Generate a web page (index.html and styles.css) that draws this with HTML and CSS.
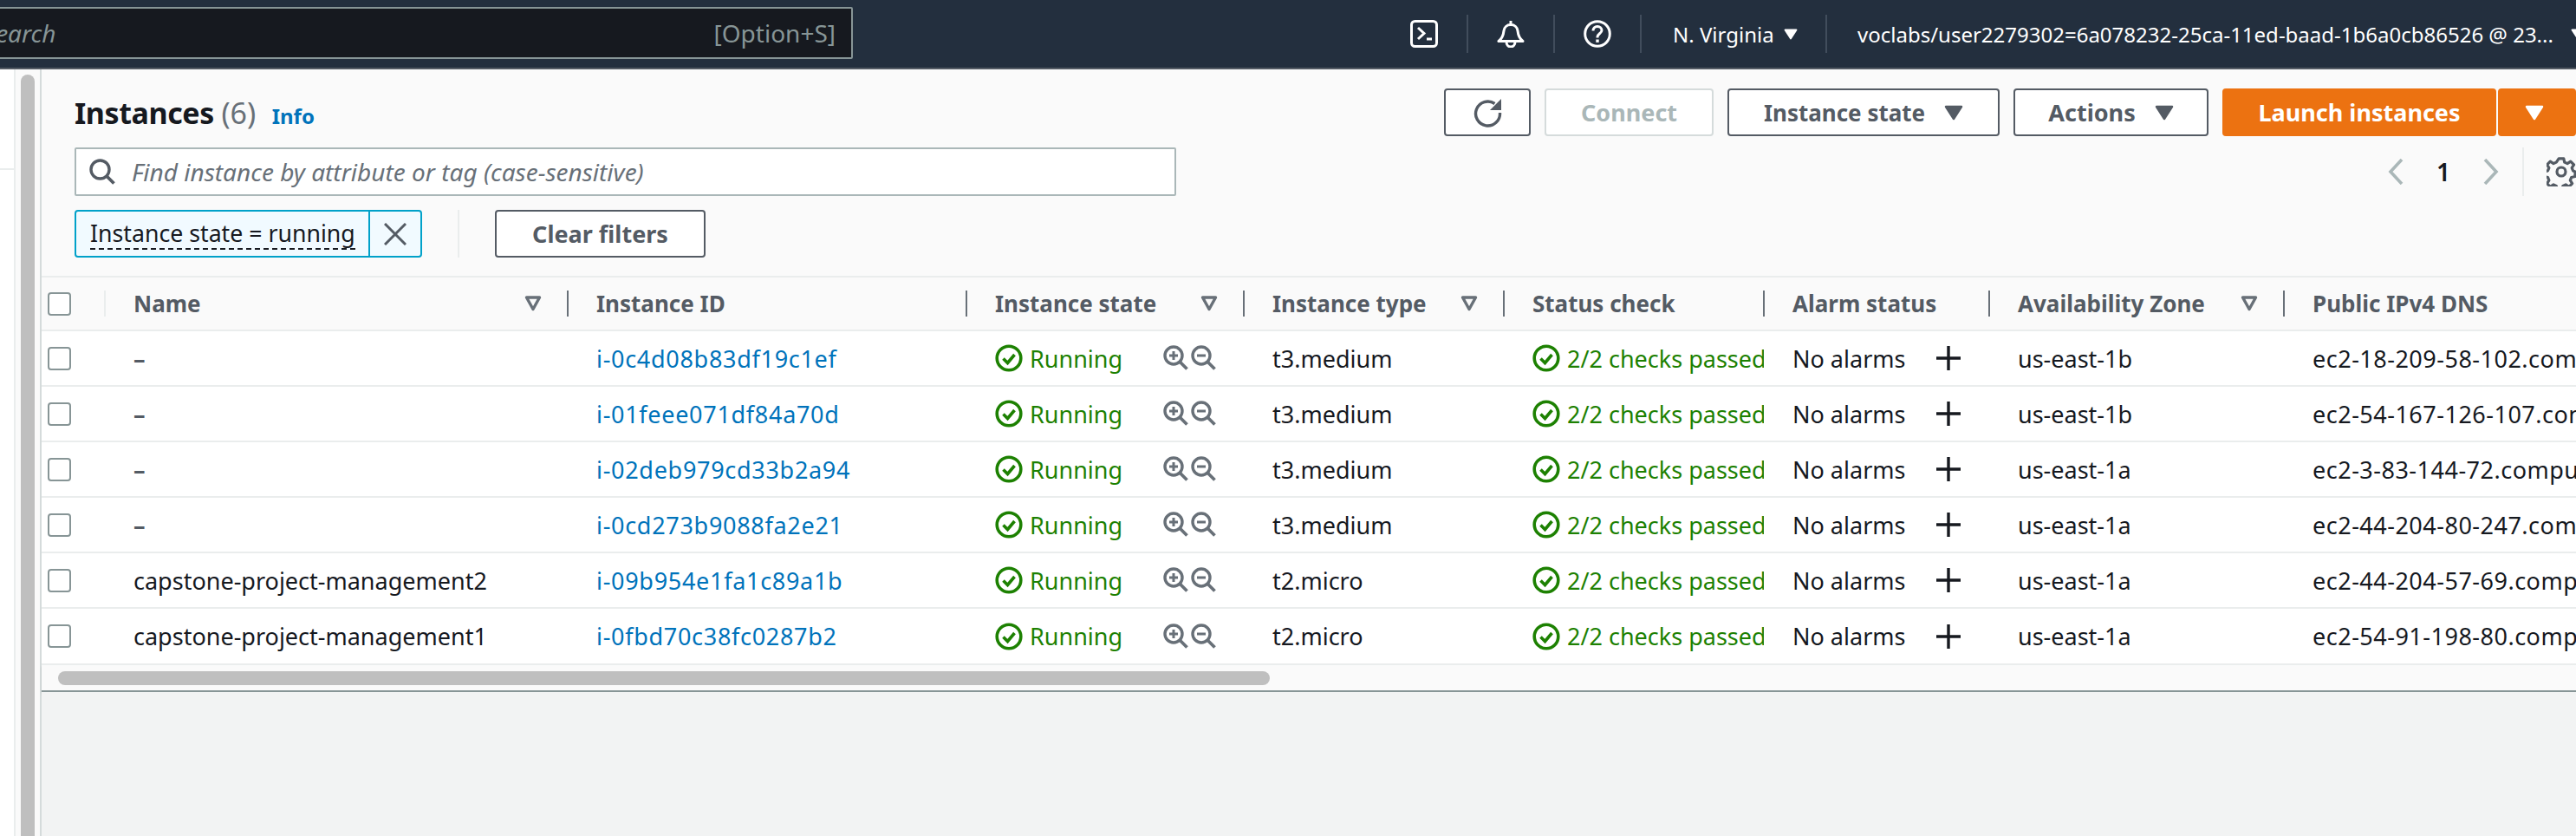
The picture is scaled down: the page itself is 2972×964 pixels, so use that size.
FILE: index.html
```html
<!DOCTYPE html>
<html lang="en">
<head>
<meta charset="utf-8">
<title>Instances | EC2</title>
<link rel="stylesheet" href="styles.css">
</head>
<body>
<svg class="defs" width="0" height="0" aria-hidden="true">
  <symbol id="i-check" viewBox="0 0 32 32"><circle cx="16" cy="16" r="13.8" fill="none" stroke="currentColor" stroke-width="3.6"/><path d="M9.5 16.5l5 5 8-9.5" fill="none" stroke="currentColor" stroke-width="3.6"/></symbol>
  <symbol id="i-zoomin" viewBox="0 0 30 30"><circle cx="12" cy="12" r="10" fill="none" stroke="currentColor" stroke-width="3.4"/><path d="M19.5 19.5l8 8" stroke="currentColor" stroke-width="3.8"/><path d="M7 12h10M12 7v10" stroke="currentColor" stroke-width="3"/></symbol>
  <symbol id="i-zoomout" viewBox="0 0 30 30"><circle cx="12" cy="12" r="10" fill="none" stroke="currentColor" stroke-width="3.4"/><path d="M19.5 19.5l8 8" stroke="currentColor" stroke-width="3.8"/><path d="M7 12h10" stroke="currentColor" stroke-width="3"/></symbol>
  <symbol id="i-plus" viewBox="0 0 28 28"><path d="M0 14h28M14 0v28" stroke="currentColor" stroke-width="3.4"/></symbol>
  <symbol id="i-filter" viewBox="0 0 20 20"><path d="M2.5 3h15L10 16.5z" fill="none" stroke="currentColor" stroke-width="3.4" stroke-linejoin="round"/></symbol>
  <symbol id="i-caret" viewBox="0 0 22 18"><path d="M2 2h18L11 16z" fill="currentColor" stroke="currentColor" stroke-width="2.5" stroke-linejoin="round"/></symbol>
</svg>

<header class="topbar">
  <div class="search">
    <span class="search-word">Search</span>
    <span class="search-key">[Option+S]</span>
  </div>
  <div class="nav-icon">
    <svg width="32" height="32" viewBox="0 0 32 32"><rect x="1.5" y="1.5" width="29" height="29" rx="4" fill="none" stroke="#fff" stroke-width="3"/><path d="M9 9l7 6.500-7 6.500" fill="none" stroke="#fff" stroke-width="3"/><path d="M19 22h6" stroke="#fff" stroke-width="3"/></svg>
  </div>
  <div class="nav-icon">
    <svg width="32" height="32" viewBox="0 0 32 32"><path d="M2 24.500h28c-4-3-5.500-7-6-12-.4-4-3.500-7-8-7s-7.600 3-8 7c-.5 5-2 9-6 12z" fill="none" stroke="#fff" stroke-width="3" stroke-linejoin="round"/><path d="M16 1v4" stroke="#fff" stroke-width="3"/><path d="M11 25c0 3.500 2 6 5 6s5-2.500 5-6" fill="none" stroke="#fff" stroke-width="3"/></svg>
  </div>
  <div class="nav-icon">
    <svg width="32" height="32" viewBox="0 0 32 32"><circle cx="16" cy="16" r="14.300" fill="none" stroke="#fff" stroke-width="3"/><path d="M11 12.500c0-3 2.200-5 5-5s5 2 5 4.500c0 3.500-5 4-5 7.500v1" fill="none" stroke="#fff" stroke-width="3"/><rect x="14.300" y="22.500" width="3.400" height="3.400" fill="#fff"/></svg>
  </div>
  <div class="nav-region">N. Virginia<svg class="nav-caret" width="16" height="13"><use href="#i-caret"/></svg></div>
  <div class="nav-user">voclabs/user2279302=6a078232-25ca-11ed-baad-1b6a0cb86526 @ 23...<svg class="nav-caret nav-caret-user" width="16" height="13"><use href="#i-caret"/></svg></div>
</header>

<main class="layout">
  <aside class="side"><div class="side-row"></div></aside>
  <div class="gutter"><div class="gutter-thumb"></div></div>
  <section class="panel">
    <div class="panel-head">
      <div class="head-row">
        <h1 class="title">Instances <span class="count">(6)</span> <a class="info">Info</a></h1>
        <div class="actions">
          <button class="btn btn-refresh" aria-label="Refresh">
            <svg width="34" height="34" viewBox="0 0 34 34"><path d="M25.500 6.500A14 14 0 1 0 31.500 17" fill="none" stroke="currentColor" stroke-width="3.400"/><path d="M33 1v13H20z" fill="currentColor"/></svg>
          </button>
          <button class="btn btn-connect">Connect</button>
          <button class="btn btn-state">Instance state<svg class="btn-caret" width="22" height="18"><use href="#i-caret"/></svg></button>
          <button class="btn btn-actions">Actions<svg class="btn-caret" width="22" height="18"><use href="#i-caret"/></svg></button>
          <button class="btn btn-launch">Launch instances</button>
          <button class="btn btn-split"><svg width="22" height="18"><use href="#i-caret"/></svg></button>
        </div>
      </div>
      <div class="find-row">
        <div class="find">
          <svg class="find-icon" width="30" height="30" viewBox="0 0 30 30"><circle cx="12.500" cy="12.500" r="10.500" fill="none" stroke="#545b64" stroke-width="3.400"/><path d="M20 20l8.500 8.500" stroke="#545b64" stroke-width="3.800"/></svg>
          <span class="find-text">Find instance by attribute or tag (case-sensitive)</span>
        </div>
        <nav class="pager">
          <svg class="pager-arrow" width="20" height="30" viewBox="0 0 20 30"><path d="M17 1L4 15l13 14" fill="none" stroke="#aab7b8" stroke-width="3.600"/></svg>
          <span class="pager-num">1</span>
          <svg class="pager-arrow" width="20" height="30" viewBox="0 0 20 30"><path d="M3 1l13 14L3 29" fill="none" stroke="#aab7b8" stroke-width="3.600"/></svg>
          <span class="pager-sep"></span>
          <svg class="gear" width="34" height="34" viewBox="0 0 34 34"><circle cx="17" cy="17" r="5" fill="none" stroke="#545b64" stroke-width="3.200"/><path d="M14 2h6l1 4.500 3.500 1.500 4-2.500 4 4-2.500 4 1.500 3.500 2.500 1v6l-4.500 1-1.500 3.500 2.500 4-4 4-4-2.500-3.500 1.500-1 4h-6l-1-4-3.500-1.500-4 2.500-4-4 2.500-4-1.500-3.500-4.500-1v-6l4.500-1 1.500-3.500-2.500-4 4-4 4 2.500 3.500-1.500z" fill="none" stroke="#545b64" stroke-width="3.400" stroke-linejoin="round" transform="translate(1 0) scale(.94)"/></svg>
        </nav>
      </div>
      <div class="chip-row">
        <div class="chip">
          <span class="chip-label"><span class="chip-text">Instance state = running</span></span>
          <span class="chip-close"><svg width="26" height="26" viewBox="0 0 26 26"><path d="M1 1l24 24M25 1L1 25" stroke="#545b64" stroke-width="3"/></svg></span>
        </div>
        <span class="chip-sep"></span>
        <button class="btn btn-clear">Clear filters</button>
      </div>
    </div>

    <div class="table">
      <div class="tr th-row">
        <div class="th th-first"><span class="box"></span></div>
        <div class="th">Name<svg class="filter" width="20" height="20"><use href="#i-filter"/></svg></div>
        <div class="th">Instance ID</div>
        <div class="th">Instance state<svg class="filter" width="20" height="20"><use href="#i-filter"/></svg></div>
        <div class="th">Instance type<svg class="filter" width="20" height="20"><use href="#i-filter"/></svg></div>
        <div class="th">Status check</div>
        <div class="th">Alarm status</div>
        <div class="th">Availability Zone<svg class="filter" width="20" height="20"><use href="#i-filter"/></svg></div>
        <div class="th th-last">Public IPv4 DNS</div>
      </div>

      <div class="tr">
        <div class="td td-first"><span class="box"></span></div>
        <div class="td td-dash">–</div>
        <div class="td"><a class="link">i-0c4d08b83df19c1ef</a></div>
        <div class="td ok"><svg class="ok-icon" width="32" height="32"><use href="#i-check"/></svg>Running<span class="zooms"><svg width="30" height="30"><use href="#i-zoomin"/></svg><svg width="30" height="30"><use href="#i-zoomout"/></svg></span></div>
        <div class="td">t3.medium</div>
        <div class="td ok"><svg class="ok-icon" width="32" height="32"><use href="#i-check"/></svg>2/2 checks passed</div>
        <div class="td">No alarms<svg class="plus" width="28" height="28"><use href="#i-plus"/></svg></div>
        <div class="td">us-east-1b</div>
        <div class="td td-dns">ec2-18-209-58-102.compute-1.amazonaws.com</div>
      </div>
      <div class="tr">
        <div class="td td-first"><span class="box"></span></div>
        <div class="td td-dash">–</div>
        <div class="td"><a class="link">i-01feee071df84a70d</a></div>
        <div class="td ok"><svg class="ok-icon" width="32" height="32"><use href="#i-check"/></svg>Running<span class="zooms"><svg width="30" height="30"><use href="#i-zoomin"/></svg><svg width="30" height="30"><use href="#i-zoomout"/></svg></span></div>
        <div class="td">t3.medium</div>
        <div class="td ok"><svg class="ok-icon" width="32" height="32"><use href="#i-check"/></svg>2/2 checks passed</div>
        <div class="td">No alarms<svg class="plus" width="28" height="28"><use href="#i-plus"/></svg></div>
        <div class="td">us-east-1b</div>
        <div class="td td-dns">ec2-54-167-126-107.compute-1.amazonaws.com</div>
      </div>
      <div class="tr">
        <div class="td td-first"><span class="box"></span></div>
        <div class="td td-dash">–</div>
        <div class="td"><a class="link">i-02deb979cd33b2a94</a></div>
        <div class="td ok"><svg class="ok-icon" width="32" height="32"><use href="#i-check"/></svg>Running<span class="zooms"><svg width="30" height="30"><use href="#i-zoomin"/></svg><svg width="30" height="30"><use href="#i-zoomout"/></svg></span></div>
        <div class="td">t3.medium</div>
        <div class="td ok"><svg class="ok-icon" width="32" height="32"><use href="#i-check"/></svg>2/2 checks passed</div>
        <div class="td">No alarms<svg class="plus" width="28" height="28"><use href="#i-plus"/></svg></div>
        <div class="td">us-east-1a</div>
        <div class="td td-dns">ec2-3-83-144-72.compute-1.amazonaws.com</div>
      </div>
      <div class="tr">
        <div class="td td-first"><span class="box"></span></div>
        <div class="td td-dash">–</div>
        <div class="td"><a class="link">i-0cd273b9088fa2e21</a></div>
        <div class="td ok"><svg class="ok-icon" width="32" height="32"><use href="#i-check"/></svg>Running<span class="zooms"><svg width="30" height="30"><use href="#i-zoomin"/></svg><svg width="30" height="30"><use href="#i-zoomout"/></svg></span></div>
        <div class="td">t3.medium</div>
        <div class="td ok"><svg class="ok-icon" width="32" height="32"><use href="#i-check"/></svg>2/2 checks passed</div>
        <div class="td">No alarms<svg class="plus" width="28" height="28"><use href="#i-plus"/></svg></div>
        <div class="td">us-east-1a</div>
        <div class="td td-dns">ec2-44-204-80-247.compute-1.amazonaws.com</div>
      </div>
      <div class="tr">
        <div class="td td-first"><span class="box"></span></div>
        <div class="td">capstone-project-management2</div>
        <div class="td"><a class="link">i-09b954e1fa1c89a1b</a></div>
        <div class="td ok"><svg class="ok-icon" width="32" height="32"><use href="#i-check"/></svg>Running<span class="zooms"><svg width="30" height="30"><use href="#i-zoomin"/></svg><svg width="30" height="30"><use href="#i-zoomout"/></svg></span></div>
        <div class="td">t2.micro</div>
        <div class="td ok"><svg class="ok-icon" width="32" height="32"><use href="#i-check"/></svg>2/2 checks passed</div>
        <div class="td">No alarms<svg class="plus" width="28" height="28"><use href="#i-plus"/></svg></div>
        <div class="td">us-east-1a</div>
        <div class="td td-dns">ec2-44-204-57-69.compute-1.amazonaws.com</div>
      </div>
      <div class="tr tr-last">
        <div class="td td-first"><span class="box"></span></div>
        <div class="td">capstone-project-management1</div>
        <div class="td"><a class="link">i-0fbd70c38fc0287b2</a></div>
        <div class="td ok"><svg class="ok-icon" width="32" height="32"><use href="#i-check"/></svg>Running<span class="zooms"><svg width="30" height="30"><use href="#i-zoomin"/></svg><svg width="30" height="30"><use href="#i-zoomout"/></svg></span></div>
        <div class="td">t2.micro</div>
        <div class="td ok"><svg class="ok-icon" width="32" height="32"><use href="#i-check"/></svg>2/2 checks passed</div>
        <div class="td">No alarms<svg class="plus" width="28" height="28"><use href="#i-plus"/></svg></div>
        <div class="td">us-east-1a</div>
        <div class="td td-dns">ec2-54-91-198-80.compute-1.amazonaws.com</div>
      </div>
    </div>

    <div class="hscroll"><div class="hscroll-thumb"></div></div>
    <div class="panel-rest"></div>
  </section>
</main>
</body>
</html>
```
FILE: styles.css
```css
* { box-sizing: border-box; }
html, body { margin: 0; height: 100%; overflow: hidden; }
body {
  width: 2972px;
  height: 964px;
  display: flex;
  flex-direction: column;
  font-family: "Noto Sans", "Open Sans", sans-serif;
  font-size: 27px;
  color: #16191f;
  background: #fff;
}
.defs { position: absolute; }

/* top bar */
.topbar {
  flex: 0 0 80px;
  display: flex;
  align-items: center;
  background: #232f3e;
  border-bottom: 2px solid #545b64;
  color: #fff;
}
.search {
  flex: 0 0 1024px;
  margin-left: -40px;
  margin-right: 610px;
  height: 60px;
  margin-top: -2px;
  padding: 0 18px 0 19px;
  display: flex;
  align-items: center;
  justify-content: space-between;
  background: #16191f;
  border: 2px solid #879596;
  border-radius: 2px;
  color: #879596;
  font-size: 28px;
}
.search-word { font-style: italic; }
.nav-icon {
  flex: 0 0 100px;
  height: 44px;
  display: flex;
  align-items: center;
  justify-content: center;
  border-right: 2px solid #414d5c;
}
.nav-region {
  flex: 0 0 214px;
  height: 44px;
  padding-left: 36px;
  display: flex;
  align-items: center;
  font-size: 24px;
  border-right: 2px solid #414d5c;
}
.nav-user {
  height: 44px;
  padding-left: 35px;
  display: flex;
  align-items: center;
  font-size: 24px;
  white-space: nowrap;
}
.nav-caret { margin-left: 11px; flex: none; color: #fff; }
.nav-caret-user { margin-left: 20px; }

/* layout */
.layout { flex: 1; display: flex; min-height: 0; }
.side { flex: 0 0 18px; background: #fff; border-right: 2px solid #eaeded; }
.side-row { height: 116px; border-bottom: 2px solid #eaeded; }
.gutter { flex: 0 0 28px; padding: 6px 6px 0; background: #fafafa; }
.gutter-thumb { height: 100%; background: #bfbfbf; border-radius: 8px 8px 0 0; }
.panel {
  flex: 1;
  min-width: 0;
  display: flex;
  flex-direction: column;
  background: #fafafa;
  border-left: 2px solid #d5dbdb;
}

/* panel header */
.panel-head { flex: 0 0 240px; padding: 22px 0 0 38px; border-bottom: 2px solid #eaeded; }
.head-row { display: flex; align-items: center; height: 55px; }
.title { margin: 0; font-size: 34px; font-weight: 700; letter-spacing: -.4px; white-space: nowrap; }
.count { font-weight: 400; color: #687078; letter-spacing: 0; }
.info { margin-left: 10px; font-size: 24px; font-weight: 700; letter-spacing: 0; color: #0073bb; }
.actions { margin-left: auto; display: flex; gap: 16px; }
.btn {
  height: 55px;
  padding: 0;
  display: flex;
  align-items: center;
  justify-content: center;
  background: #fff;
  border: 2px solid #545b64;
  border-radius: 4px;
  color: #545b64;
  font: 700 27px "Noto Sans", "Open Sans", sans-serif;
}
.btn-refresh { width: 100px; }
.btn-connect { width: 195px; border-color: #d5dbdb; color: #aab7b8; }
.btn-state { width: 314px; font-size: 26px; }
.btn-actions { width: 225px; }
.btn-caret { margin-left: 22px; }
.btn-launch { width: 316px; background: #ec7211; border-color: #ec7211; color: #fff; }
.btn-split { width: 90px; margin-left: -14px; justify-content: flex-start; padding-left: 29px; background: #ec7211; border-color: #ec7211; color: #fff; }

.find-row { display: flex; align-items: center; margin-top: 13px; height: 56px; }
.find {
  width: 1271px;
  height: 56px;
  padding-left: 15px;
  display: flex;
  align-items: center;
  background: #fff;
  border: 2px solid #aab7b8;
  border-radius: 2px;
}
.find-icon { flex: none; margin-right: 19px; }
.find-text { font-style: italic; color: #687078; font-size: 28px; }
.pager { margin-left: auto; height: 56px; display: flex; align-items: center; }
.pager-num { width: 90px; text-align: center; font-weight: 600; font-size: 28px; }
.pager-sep { width: 2px; height: 56px; margin: 0 26px 0 26px; background: #eaeded; }
.gear { flex: none; }

.chip-row { display: flex; align-items: center; margin-top: 16px; height: 55px; }
.chip {
  width: 401px;
  height: 55px;
  display: flex;
  background: #f1faff;
  border: 2px solid #00a1c9;
  border-radius: 4px;
}
.chip-label { flex: 1; padding-left: 16px; display: flex; align-items: center; border-right: 2px solid #00a1c9; font-size: 26.7px; }
.chip-text { border-bottom: 2px dashed #16191f; line-height: 34px; white-space: nowrap; }
.chip-close { flex: 0 0 58px; display: flex; align-items: center; justify-content: center; }
.chip-sep { width: 2px; height: 55px; margin: 0 41px; background: #eaeded; }
.btn-clear { width: 243px; }

/* table */
.tr {
  display: grid;
  grid-template-columns: 73px 534px 460px 320px 300px 300px 260px 340px 337px;
  height: 64px;
  background: #fff;
  border-bottom: 2px solid #eaeded;
}
.tr-last { height: 65px; }
.th-row { background: #fafafa; height: 62px; }
.th {
  position: relative;
  display: flex;
  align-items: center;
  padding: 0 30px 0 33px;
  font-size: 26px;
  font-weight: 700;
  color: #545b64;
  white-space: nowrap;
}
.th::after {
  content: "";
  position: absolute;
  right: -1px;
  top: 15px;
  height: 30px;
  width: 2px;
  background: #687078;
}
.th-first { padding: 0 0 0 7px; }
.th-first::after { background: #eaeded; }
.th-last::after { display: none; }
.filter { margin-left: auto; flex: none; color: #687078; }
.box {
  display: block;
  width: 27px;
  height: 27px;
  background: #fff;
  border: 2px solid #879596;
  border-radius: 4px;
}
.td {
  display: flex;
  align-items: center;
  padding-left: 33px;
  min-width: 0;
  overflow: hidden;
  white-space: nowrap;
}
.td-first { padding-left: 7px; }
.td-dash { color: #545b64; font-weight: 700; }
.td-dns { letter-spacing: .5px; }
.link { color: #0073bb; letter-spacing: .7px; }
.ok { color: #1d8102; }
.ok-icon { flex: none; margin-right: 8px; }
.zooms { margin-left: 47px; display: flex; gap: 2px; color: #687078; }
.plus { margin-left: auto; margin-right: 33px; flex: none; color: #16191f; }

/* horizontal scrollbar */
.hscroll {
  flex: 0 0 31px;
  padding: 7px 0 0 19px;
  background: #fafafa;
  border-bottom: 2px solid #879596;
  box-shadow: 0 2px 2px rgba(0, 28, 36, .15);
}
.hscroll-thumb { width: 1398px; height: 16px; background: #bfbfbf; border-radius: 8px; }
.panel-rest { flex: 1; background: #f2f3f3; }
```
